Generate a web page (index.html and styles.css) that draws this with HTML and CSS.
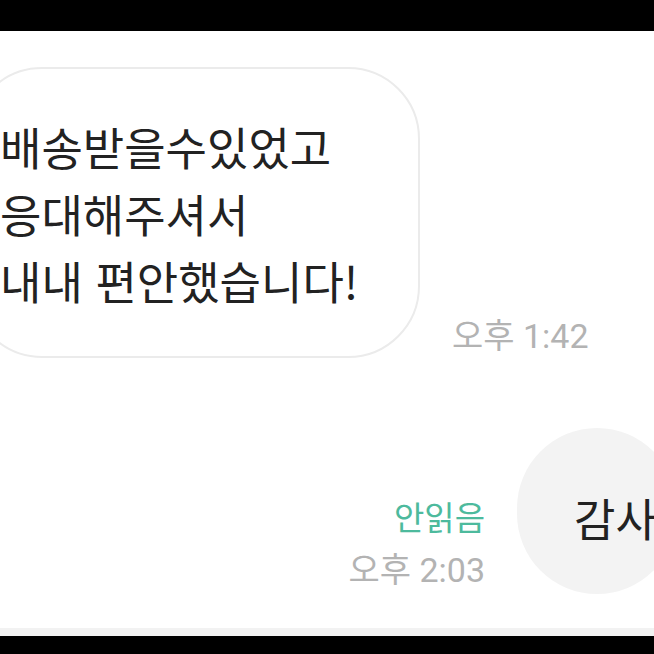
FILE: index.html
```html
<!DOCTYPE html>
<html lang="ko">
<head>
  <meta charset="UTF-8" />
  <meta name="viewport" content="width=device-width, initial-scale=1.0"/>
  <title>채팅</title>
  <link rel="stylesheet" href="styles.css">
</head>
<body>
  <div class="screen">
    <div class="bar-top"></div>

    <div class="chat">
      <!-- received message -->
      <div class="row row-left">
        <div class="bubble bubble-in">
          <p>배송받을수있었고</p>
          <p>응대해주셔서</p>
          <p>내내 편안했습니다!</p>
        </div>
        <span class="time">오후 1:42</span>
      </div>

      <!-- sent message -->
      <div class="row row-right">
        <div class="meta">
          <span class="unread">안읽음</span>
          <span class="time">오후 2:03</span>
        </div>
        <div class="bubble bubble-out">감사</div>
      </div>
    </div>

    <div class="bar-line"></div>
    <div class="bar-bottom"></div>
  </div>
</body>
</html>
```

FILE: styles.css
```css
html, body {
  margin: 0;
  padding: 0;
  background: #fff;
  font-family: Roboto, "Noto Sans CJK KR", sans-serif;
  color: #222;
}

.screen {
  width: 654px;
  height: 654px;
  display: flex;
  flex-direction: column;
  overflow: hidden;
}

.bar-top {
  height: 31px;
  background: #000;
  flex-shrink: 0;
}

.chat {
  flex: 1;
  overflow: hidden;
  padding-top: 36px;
}

.row {
  display: flex;
  align-items: flex-end;
}

.bubble {
  font-family: "Noto Sans CJK KR", sans-serif;
  font-size: 45px;
  flex-shrink: 0;
  box-sizing: border-box;
}

.bubble-in {
  width: 450px;
  margin-left: -30px;
  padding: 44px 24px 42px 28px;
  border: 2px solid #ebebeb;
  border-radius: 72px;
  line-height: 67px;
}

.bubble-in p {
  margin: 0;
  white-space: nowrap;
}

.time {
  font-size: 34px;
  color: #b3b3b3;
  white-space: nowrap;
  line-height: 40px;
}

.row-left .time {
  margin-left: 32px;
  margin-bottom: 2px;
}

.row-right {
  margin-top: 70px;
  gap: 32px;
}

.meta {
  flex: 0 0 485px;
  display: flex;
  flex-direction: column;
  align-items: flex-end;
  gap: 14px;
  margin-bottom: 4px;
}

.unread {
  font-family: "Noto Sans CJK KR", sans-serif;
  font-size: 33px;
  color: #4dba9d;
  line-height: 40px;
}

.bubble-out {
  background: #f3f3f3;
  border-radius: 84px;
  height: 166px;
  width: 160px;
  padding: 12px 0 0 57px;
  display: flex;
  align-items: center;
  white-space: nowrap;
}

.bar-line {
  height: 8px;
  background: #f2f2f2;
  flex-shrink: 0;
}

.bar-bottom {
  height: 18px;
  background: #000;
  flex-shrink: 0;
}
```
